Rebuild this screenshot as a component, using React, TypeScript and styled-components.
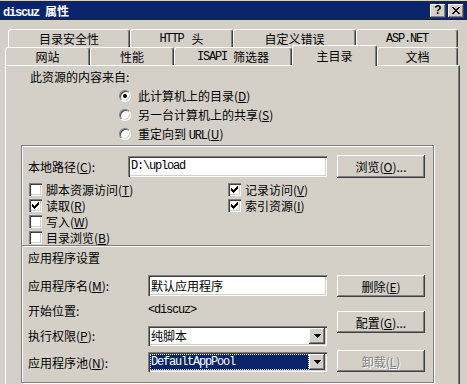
import React from "react";
import styled, { createGlobalStyle } from "styled-components";

const FACE = "#d4d0c8";

const Global = createGlobalStyle`
  html, body { margin: 0; padding: 0; background: ${FACE}; }
  body {
    font-family: "Noto Sans CJK SC", "Noto Sans", sans-serif;
    font-size: 12px;
    color: #000;
  }
  * { box-sizing: border-box; }
`;

const Window = styled.div`
  width: 467px;
  height: 384px;
  overflow: hidden;
  background: ${FACE};
  display: flex;
  flex-direction: column;
  padding-top: 1px;
`;

const TitleBar = styled.div`
  height: 19px;
  flex: none;
  background: #0a246a;
  display: flex;
  align-items: center;
  padding: 0 3px;
`;

const TitleText = styled.div`
  flex: 1;
  color: #fff;
  font-weight: bold;
  font-size: 12px;
  white-space: nowrap;
`;

const CaptionButtons = styled.div`
  display: flex;
  gap: 2px;
`;

const CaptionBtn = styled.div`
  width: 16px;
  height: 14px;
  background: ${FACE};
  box-shadow: inset -1px -1px #404040, inset 1px 1px #fff, inset -2px -2px #808080;
  display: flex;
  align-items: center;
  justify-content: center;
  font: bold 12px "Liberation Sans", sans-serif;
  line-height: 1;
  padding-bottom: 1px;
`;

const Latin = styled.span<{ $bold?: boolean; $gap?: number }>`
  font-family: "Liberation Mono", monospace;
  letter-spacing: -1.2px;
  font-weight: ${(p) => (p.$bold ? "bold" : "normal")};
  margin-right: ${(p) => p.$gap ?? 0}px;
`;

const Key = styled.span`
  text-decoration: underline;
`;

const TabStrip = styled.div`
  margin-top: 9px;
  display: flex;
  flex-direction: column;
  flex: none;
`;

const TabRow = styled.div<{ $indent: number }>`
  display: flex;
  height: 18px;
  padding-left: ${(p) => p.$indent}px;
`;

const Tab = styled.div<{ $w: number; $sel?: boolean }>`
  width: ${(p) => p.$w}px;
  height: ${(p) => (p.$sel ? 21 : 18)}px;
  margin-top: ${(p) => (p.$sel ? -2 : 0)}px;
  flex: none;
  position: relative;
  z-index: ${(p) => (p.$sel ? 2 : 0)};
  background: ${FACE};
  border-top: 1px solid #fff;
  border-left: 1px solid #fff;
  border-right: 1px solid #404040;
  border-radius: 3px 3px 0 0;
  box-shadow: inset -1px 0 #808080;
  display: flex;
  align-items: center;
  justify-content: center;
  padding-bottom: ${(p) => (p.$sel ? 2 : 0)}px;
  white-space: nowrap;
`;

const Panel = styled.div`
  margin-left: 5px;
  width: 455px;
  flex: 1;
  border-top: 1px solid #fff;
  border-left: 1px solid #fff;
  border-right: 1px solid #404040;
  box-shadow: inset -1px 0 #808080;
  display: flex;
  flex-direction: column;
`;

const SourceHeading = styled.div`
  height: 20px;
  padding-left: 24px;
  display: flex;
  align-items: center;
  flex: none;
`;

const RadioList = styled.div`
  padding-left: 113px;
  display: flex;
  flex-direction: column;
  flex: none;
`;

const RadioRow = styled.div`
  height: 19px;
  display: flex;
  align-items: center;
  gap: 7px;
  white-space: nowrap;
`;

const RadioCircle = styled.div`
  width: 12px;
  height: 12px;
  border-radius: 50%;
  background: #fff;
  border: 1px solid;
  border-color: #808080 #fff #fff #808080;
  box-shadow: inset 1px 1px #404040, inset -1px -1px ${FACE};
  display: flex;
  align-items: center;
  justify-content: center;
`;

const RadioDot = styled.div`
  width: 4px;
  height: 4px;
  border-radius: 50%;
  background: #000;
`;

const Frame = styled.div`
  margin: 2px 0 0 15px;
  width: 413px;
  height: 238px;
  flex: none;
  border: 1px solid #808080;
  box-shadow: inset 1px 1px #fff, 1px 1px #fff;
  padding-left: 6px;
  display: flex;
  flex-direction: column;
`;

const PathRow = styled.div`
  margin-top: 8px;
  height: 24px;
  display: flex;
  align-items: center;
  flex: none;
`;

const Label = styled.div<{ $w: number }>`
  width: ${(p) => p.$w}px;
  flex: none;
  white-space: nowrap;
`;

const TextBox = styled.div<{ $w: number }>`
  width: ${(p) => p.$w}px;
  height: 21px;
  flex: none;
  background: #fff;
  box-shadow: inset 1px 1px #808080, inset 2px 2px #404040, inset -1px -1px #fff,
    inset -2px -2px ${FACE};
  display: flex;
  align-items: center;
  padding: 0 3px 0 3px;
  white-space: nowrap;
`;

const Button = styled.div<{ $h?: number; $mt?: number; $disabled?: boolean }>`
  width: 88px;
  height: ${(p) => p.$h ?? 22}px;
  margin-top: ${(p) => p.$mt ?? 0}px;
  flex: none;
  background: ${FACE};
  box-shadow: inset -1px -1px #404040, inset 1px 1px #fff, inset -2px -2px #808080;
  display: flex;
  align-items: center;
  justify-content: center;
  white-space: nowrap;
  color: ${(p) => (p.$disabled ? "#808080" : "#000")};
  text-shadow: ${(p) => (p.$disabled ? "1px 1px #fff" : "none")};
`;

const PathGap = styled.div`
  width: 10px;
  flex: none;
`;

const CheckGrid = styled.div`
  margin-top: 3px;
  padding-left: 1px;
  display: grid;
  grid-template-columns: 199px 1fr;
  grid-auto-rows: 16px;
  flex: none;
`;

const CheckItem = styled.div`
  display: flex;
  align-items: center;
  gap: 4px;
  white-space: nowrap;
`;

const CheckBox = styled.div`
  width: 13px;
  height: 13px;
  flex: none;
  background: #fff;
  box-shadow: inset 1px 1px #808080, inset 2px 2px #404040, inset -1px -1px #fff,
    inset -2px -2px ${FACE};
  display: flex;
  align-items: center;
  justify-content: center;
`;

const Separator = styled.div`
  margin-left: -6px;
  width: 408px;
  height: 2px;
  flex: none;
  border-top: 1px solid #808080;
  border-bottom: 1px solid #fff;
`;

const SectionTitle = styled.div`
  height: 20px;
  display: flex;
  align-items: center;
  flex: none;
`;

const AppBody = styled.div`
  margin-top: 7px;
  display: flex;
  gap: 10px;
  flex: none;
`;

const FieldColumn = styled.div`
  width: 299px;
  display: flex;
  flex-direction: column;
`;

const FieldRow = styled.div<{ $h: number }>`
  height: ${(p) => p.$h}px;
  display: flex;
  align-items: center;
`;

const ButtonColumn = styled.div`
  display: flex;
  flex-direction: column;
`;

const Combo = styled.div`
  width: 179px;
  height: 20px;
  flex: none;
  background: #fff;
  padding: 2px;
  box-shadow: inset 1px 1px #808080, inset 2px 2px #404040, inset -1px -1px #fff,
    inset -2px -2px ${FACE};
  display: flex;
`;

const ComboText = styled.div<{ $sel?: boolean }>`
  flex: 1;
  display: flex;
  align-items: center;
  padding-left: 1px;
  white-space: nowrap;
  background: ${(p) => (p.$sel ? "#0a246a" : "transparent")};
  color: ${(p) => (p.$sel ? "#fff" : "#000")};
  outline: ${(p) => (p.$sel ? "1px dotted #fff" : "none")};
  outline-offset: -1px;
`;

const DropBtn = styled.div`
  width: 16px;
  height: 16px;
  flex: none;
  background: ${FACE};
  box-shadow: inset -1px -1px #404040, inset 1px 1px #fff, inset -2px -2px #808080;
  display: flex;
  align-items: center;
  justify-content: center;
`;

const CheckMark = () => (
  <svg width="7" height="7" viewBox="0 0 7 7" shapeRendering="crispEdges">
    {[2, 3, 4, 3, 2, 1, 0].map((t, i) => (
      <rect key={i} x={i} y={t} width="1" height="3" fill="#000" />
    ))}
  </svg>
);

const CloseGlyph = () => {
  const rows: [number, number][] = [
    [0, 6],
    [1, 5],
    [2, 4],
    [3, 3],
    [2, 4],
    [1, 5],
    [0, 6],
  ];
  return (
    <svg width="8" height="7" viewBox="0 0 8 7" shapeRendering="crispEdges">
      {rows.map(([a, b], y) => (
        <React.Fragment key={y}>
          <rect x={a} y={y} width="2" height="1" fill="#000" />
          <rect x={b} y={y} width="2" height="1" fill="#000" />
        </React.Fragment>
      ))}
    </svg>
  );
};

const DownArrow = () => (
  <svg width="7" height="4" viewBox="0 0 7 4" shapeRendering="crispEdges">
    <rect x="0" y="0" width="7" height="1" fill="#000" />
    <rect x="1" y="1" width="5" height="1" fill="#000" />
    <rect x="2" y="2" width="3" height="1" fill="#000" />
    <rect x="3" y="3" width="1" height="1" fill="#000" />
  </svg>
);

const Radio = ({ checked, children }: { checked?: boolean; children: React.ReactNode }) => (
  <RadioRow>
    <RadioCircle>{checked && <RadioDot />}</RadioCircle>
    <span>{children}</span>
  </RadioRow>
);

const Check = ({ checked, children }: { checked?: boolean; children: React.ReactNode }) => (
  <CheckItem>
    <CheckBox>{checked && <CheckMark />}</CheckBox>
    <span>{children}</span>
  </CheckItem>
);

export default function App() {
  return (
    <>
      <Global />
      <Window>
        <TitleBar>
          <TitleText>
            <Latin $bold $gap={6}>discuz</Latin>属性
          </TitleText>
          <CaptionButtons>
            <CaptionBtn>?</CaptionBtn>
            <CaptionBtn>
              <CloseGlyph />
            </CaptionBtn>
          </CaptionButtons>
        </TitleBar>

        <TabStrip>
          <TabRow $indent={8}>
            <Tab $w={122}>目录安全性</Tab>
            <Tab $w={103}>
              <Latin $gap={8}>HTTP</Latin>头
            </Tab>
            <Tab $w={123}>自定义错误</Tab>
            <Tab $w={102}>
              <Latin>ASP.NET</Latin>
            </Tab>
          </TabRow>
          <TabRow $indent={5}>
            <Tab $w={85}>网站</Tab>
            <Tab $w={84}>性能</Tab>
            <Tab $w={118}>
              <Latin $gap={6}>ISAPI</Latin>筛选器
            </Tab>
            <Tab $w={85} $sel>
              主目录
            </Tab>
            <Tab $w={81}>文档</Tab>
          </TabRow>
        </TabStrip>

        <Panel>
          <SourceHeading>此资源的内容来自:</SourceHeading>
          <RadioList>
            <Radio checked>
              此计算机上的目录(<Key>D</Key>)
            </Radio>
            <Radio>
              另一台计算机上的共享(<Key>S</Key>)
            </Radio>
            <Radio>
              重定向到 <Latin>URL</Latin>(<Key>U</Key>)
            </Radio>
          </RadioList>

          <Frame>
            <PathRow>
              <Label $w={100}>
                本地路径(<Key>C</Key>):
              </Label>
              <TextBox $w={199}>
                <Latin>D:\upload</Latin>
              </TextBox>
              <PathGap />
              <Button $h={23}>
                浏览(<Key>O</Key>)...
              </Button>
            </PathRow>

            <CheckGrid>
              <Check>
                脚本资源访问(<Key>T</Key>)
              </Check>
              <Check checked>
                记录访问(<Key>V</Key>)
              </Check>
              <Check checked>
                读取(<Key>R</Key>)
              </Check>
              <Check checked>
                索引资源(<Key>I</Key>)
              </Check>
              <Check>
                写入(<Key>W</Key>)
              </Check>
              <div />
              <Check>
                目录浏览(<Key>B</Key>)
              </Check>
              <div />
            </CheckGrid>

            <Separator />
            <SectionTitle>应用程序设置</SectionTitle>

            <AppBody>
              <FieldColumn>
                <FieldRow $h={23}>
                  <Label $w={120}>
                    应用程序名(<Key>M</Key>):
                  </Label>
                  <TextBox $w={179}>默认应用程序</TextBox>
                </FieldRow>
                <FieldRow $h={26}>
                  <Label $w={120}>开始位置:</Label>
                  <Latin>&lt;discuz&gt;</Latin>
                </FieldRow>
                <FieldRow $h={25}>
                  <Label $w={120}>
                    执行权限(<Key>P</Key>):
                  </Label>
                  <Combo>
                    <ComboText>纯脚本</ComboText>
                    <DropBtn>
                      <DownArrow />
                    </DropBtn>
                  </Combo>
                </FieldRow>
                <FieldRow $h={28}>
                  <Label $w={120}>
                    应用程序池(<Key>N</Key>):
                  </Label>
                  <Combo>
                    <ComboText $sel>
                      <Latin>DefaultAppPool</Latin>
                    </ComboText>
                    <DropBtn>
                      <DownArrow />
                    </DropBtn>
                  </Combo>
                </FieldRow>
              </FieldColumn>
              <ButtonColumn>
                <Button $mt={1}>
                  删除(<Key>E</Key>)
                </Button>
                <Button $mt={14}>
                  配置(<Key>G</Key>)...
                </Button>
                <Button $mt={17} $disabled>
                  卸载(<Key>L</Key>)
                </Button>
              </ButtonColumn>
            </AppBody>
          </Frame>
        </Panel>
      </Window>
    </>
  );
}
